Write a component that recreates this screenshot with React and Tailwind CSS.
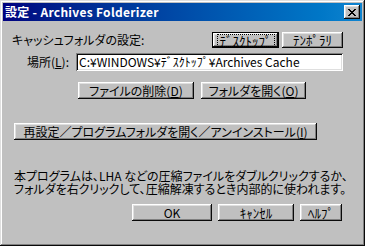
import React from 'react';

const bevel =
  'shadow-[inset_-1px_-1px_0_#0a0a0a,inset_1px_1px_0_#ffffff,inset_-2px_-2px_0_#808080,inset_2px_2px_0_#dfdfdf]';

function Btn({ w, h = 17, children, isDefault, wide }) {
  const txt = wide ? 'text-[13px] [font-feature-settings:normal]' : '';
  if (isDefault) {
    return (
      <div className="border border-black bg-[#c0c0c0]" style={{ width: w, height: h }}>
        <div className={`w-full h-full flex items-center justify-center ${bevel}`}>
          <span className={`outline outline-1 outline-dotted outline-black px-[2px] leading-[11px] ${txt}`}>{children}</span>
        </div>
      </div>
    );
  }
  return (
    <div
      className={`bg-[#c0c0c0] flex items-center justify-center whitespace-nowrap ${bevel} ${txt}`}
      style={{ width: w, height: h }}
    >
      {children}
    </div>
  );
}

function U({ children }) {
  return <span className="underline underline-offset-1">{children}</span>;
}

export default function App() {
  return (
    <div
      className="w-[365px] h-[246px] bg-[#c0c0c0] p-[3px] flex flex-col text-black text-[12px] leading-[14px] [font-feature-settings:'palt'] shadow-[inset_-1px_-1px_0_#0a0a0a,inset_1px_1px_0_#dfdfdf,inset_-2px_-2px_0_#808080,inset_2px_2px_0_#ffffff]"
      style={{ fontFamily: '"Noto Sans CJK JP", sans-serif' }}
    >
      {/* title bar */}
      <div className="h-[18px] flex items-center justify-between bg-gradient-to-r from-[#000080] to-[#1084d0] pl-[2px] pr-[2px]">
        <span className="text-white font-bold text-[12px] tracking-[0.3px]">設定 - Archives Folderizer</span>
        <div className={`w-[16px] h-[14px] bg-[#c0c0c0] flex items-center justify-center ${bevel}`}>
          <svg width="8" height="7" viewBox="0 0 8 7" shapeRendering="crispEdges">
            <path
              d="M0 0h2v1H0zM6 0h2v1H6zM1 1h2v1H1zM5 1h2v1H5zM2 2h4v1H2zM3 3h2v1H3zM2 4h4v1H2zM1 5h2v1H1zM5 5h2v1H5zM0 6h2v1H0zM6 6h2v1H6z"
              fill="#000"
            />
          </svg>
        </div>
      </div>

      {/* cache folder row */}
      <div className="flex items-center mt-[11px] pl-[9px]">
        <div className="w-[200px]">キャッシュフォルダの設定:</div>
        <div className="flex gap-[3px]">
          <Btn w={67} h={16} isDefault wide>ﾃﾞｽｸﾄｯﾌﾟ</Btn>
          <Btn w={61} h={16} wide>ﾃﾝﾎﾟﾗﾘ</Btn>
        </div>
      </div>

      {/* location */}
      <div className="flex items-center mt-[5px] pl-[24px]">
        <div className="w-[49px]">場所(<U>L</U>):</div>
        <div className="w-[267px] h-[18px] bg-white flex items-center pl-[3px] shadow-[inset_1px_1px_0_#808080,inset_-1px_-1px_0_#ffffff,inset_2px_2px_0_#0a0a0a,inset_-2px_-2px_0_#dfdfdf]">
          C:¥WINDOWS¥ﾃﾞｽｸﾄｯﾌﾟ¥Archives Cache
        </div>
      </div>

      <div className="flex mt-[11px] pl-[75px] gap-[7px]">
        <Btn w={116}>ファイルの削除(<U>D</U>)</Btn>
        <Btn w={105}>フォルダを開く(<U>O</U>)</Btn>
      </div>

      <div className="flex mt-[24px] pl-[11px]">
        <Btn w={303}>再設定／プログラムフォルダを開く／アンインストール(<U>I</U>)</Btn>
      </div>

      <p className="mt-[30px] pl-[11px] leading-[12.5px] whitespace-nowrap">
        本プログラムは、LHA などの圧縮ファイルをダブルクリックするか、
        <br />
        フォルダを右クリックして、圧縮解凍するとき内部的に使われます。
      </p>

      <div className="flex mt-[9px] pl-[129px] gap-[6px]">
        <Btn w={80}>OK</Btn>
        <Btn w={76} wide>ｷｬﾝｾﾙ</Btn>
        <Btn w={42} wide>ﾍﾙﾌﾟ</Btn>
      </div>
    </div>
  );
}
